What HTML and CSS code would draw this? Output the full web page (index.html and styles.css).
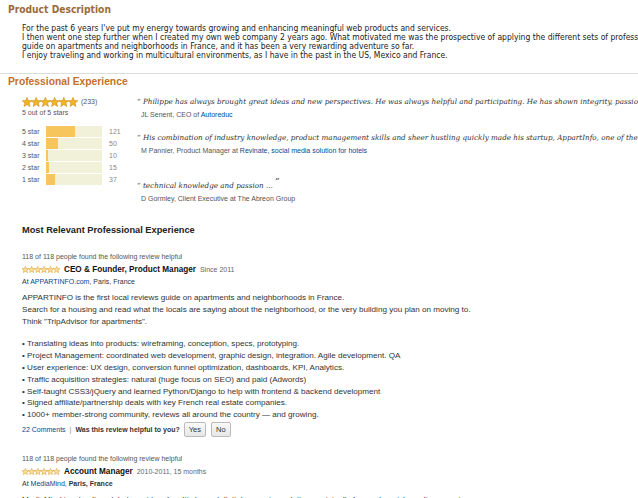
FILE: index.html
```html
<!DOCTYPE html>
<html lang="en">
<head>
    <meta charset="UTF-8">
    <meta name="viewport" content="width=device-width, initial-scale=1.0">
    <title>Profile</title>
    <link rel="stylesheet" href="styles.css">
</head>
<body>
    <svg width="0" height="0" class="defs">
        <defs>
            <polygon id="star" points="5,0.4 6.3,3.6 9.8,3.8 7.1,6 8,9.5 5,7.6 2,9.5 2.9,6 0.2,3.8 3.7,3.6"/>
        </defs>
    </svg>

    <h2 class="section-title desc-title">Product Description</h2>
    <div class="desc-text">
        <p>For the past 6 years I've put my energy towards growing and enhancing meaningful web products and services.</p>
        <p>I then went one step further when I created my own web company 2 years ago. What motivated me was the prospective of applying the different sets of professional skills I had acquired to a local reviews</p>
        <p>guide on apartments and neighborhoods in France, and it has been a very rewarding adventure so far.</p>
        <p>I enjoy traveling and working in multicultural environments, as I have in the past in the US, Mexico and France.</p>
    </div>
    <hr class="divider">

    <h2 class="section-title exp-title">Professional Experience</h2>
    <div class="summary">
        <div class="rating-box">
            <div class="big-rating">
                <svg class="stars-big" width="56" height="10" viewBox="0 0 56 10">
                    <use href="#star" x="0"/><use href="#star" x="9.2"/><use href="#star" x="18.4"/>
                    <use href="#star" x="27.6"/><use href="#star" x="36.8"/><use href="#star" x="46"/>
                </svg>
                <span class="count">(233)</span>
            </div>
            <div class="out-of">5 out of 5 stars</div>
            <div class="histo">
                <div class="histo-row"><span class="lbl">5 star</span><span class="bar"><span class="fill" style="width:52%"></span></span><span class="num">121</span></div>
                <div class="histo-row"><span class="lbl">4 star</span><span class="bar"><span class="fill" style="width:21%"></span></span><span class="num">50</span></div>
                <div class="histo-row"><span class="lbl">3 star</span><span class="bar"><span class="fill" style="width:4%"></span></span><span class="num">10</span></div>
                <div class="histo-row"><span class="lbl">2 star</span><span class="bar"><span class="fill" style="width:6%"></span></span><span class="num">15</span></div>
                <div class="histo-row"><span class="lbl">1 star</span><span class="bar"><span class="fill" style="width:16%"></span></span><span class="num">37</span></div>
            </div>
        </div>
        <div class="quotes">
            <div class="quote">
                <p class="quote-text">&ldquo; Philippe has always brought great ideas and new perspectives. He was always helpful and participating. He has shown integrity, passion and commitment.</p>
                <p class="quote-by">JL Senent, CEO of <a href="#">Autoreduc</a></p>
            </div>
            <div class="quote">
                <p class="quote-text">&ldquo; His combination of industry knowledge, product management skills and sheer hustling quickly made his startup, AppartInfo, one of the leading sites.</p>
                <p class="quote-by">M Pannier, Product Manager at <a href="#">Revinate, social media solution for hotels</a></p>
            </div>
            <div class="quote">
                <p class="quote-text">&ldquo; technical knowledge and passion ... <sup>&rdquo;</sup></p>
                <p class="quote-by">D Gormley, Client Executive at The Abreon Group</p>
            </div>
        </div>
    </div>

    <h3 class="relevant">Most Relevant Professional Experience</h3>

    <div class="review">
        <div class="helpful">118 of 118 people found the following review helpful</div>
        <div class="review-head">
            <svg class="stars-small" width="38" height="7" viewBox="0 0 56 10">
                <use href="#star" x="0"/><use href="#star" x="9.2"/><use href="#star" x="18.4"/>
                <use href="#star" x="27.6"/><use href="#star" x="36.8"/><use href="#star" x="46"/>
            </svg>
            <b class="role">CEO &amp; Founder, Product Manager</b>
            <span class="when">Since 2011</span>
        </div>
        <div class="where">At <a href="#">APPARTINFO.com</a>, Paris, France</div>
        <div class="review-body">
            <p>APPARTINFO is the first local reviews guide on apartments and neighborhoods in France.</p>
            <p>Search for a housing and read what the locals are saying about the neighborhood, or the very building you plan on moving to.</p>
            <p>Think "TripAdvisor for apartments".</p>
            <p class="gap">&bull; Translating ideas into products: wireframing, conception, specs, prototyping.</p>
            <p>&bull; Project Management: coordinated web development, graphic design, integration. Agile development. QA</p>
            <p>&bull; User experience: UX design, conversion funnel optimization, dashboards, KPI, Analytics.</p>
            <p>&bull; Traffic acquisition strategies: natural (huge focus on SEO) and paid (Adwords)</p>
            <p>&bull; Self-taught CSS3/jQuery and learned Python/Django to help with frontend &amp; backend development</p>
            <p>&bull; Signed affiliate/partnership deals with key French real estate companies.</p>
            <p>&bull; 1000+ member-strong community, reviews all around the country &mdash; and growing.</p>
        </div>
        <div class="review-foot">
            <a href="#">22 Comments</a>
            <span class="sep">|</span>
            <b>Was this review helpful to you?</b>
            <button class="vote">Yes</button>
            <button class="vote">No</button>
        </div>
    </div>

    <div class="review">
        <div class="helpful">118 of 118 people found the following review helpful</div>
        <div class="review-head">
            <svg class="stars-small" width="38" height="7" viewBox="0 0 56 10">
                <use href="#star" x="0"/><use href="#star" x="9.2"/><use href="#star" x="18.4"/>
                <use href="#star" x="27.6"/><use href="#star" x="36.8"/><use href="#star" x="46"/>
            </svg>
            <b class="role">Account Manager</b>
            <span class="when">2010-2011, 15 months</span>
        </div>
        <div class="where">At <a href="#">MediaMind</a>, <b>Paris, France</b></div>
        <div class="review-body">
            <p>MediaMind is a leading global provider of multi channel digital campaign solutions, originally focused on rich media campaigns.</p>
        </div>
    </div>
</body>
</html>
```

FILE: styles.css
```css
body {
    margin: 0;
    padding: 0 0 0 8px;
    overflow: hidden;
    white-space: nowrap;
    font-family: "Liberation Sans", Arial, sans-serif;
    color: #333;
    background: #fff;
}
p {
    margin: 0;
}
a {
    color: #004b91;
    text-decoration: none;
}
.defs {
    position: absolute;
}
.section-title {
    margin: 0;
    font-weight: bold;
}
.desc-title {
    padding-top: 3px;
    font-family: "DejaVu Sans Condensed", "DejaVu Sans", sans-serif;
    font-size: 10.2px;
    line-height: 13px;
    color: #9c6b38;
}
.desc-text {
    margin: 8px 0 0 14px;
    font-family: "DejaVu Sans Condensed", "DejaVu Sans", sans-serif;
    font-size: 8.5px;
    line-height: 9px;
    color: #222;
}
.divider {
    margin: 13px 0 0 -8px;
    border: 0;
    border-top: 1px solid #ddd;
}
.exp-title {
    margin-top: 1px;
    font-size: 10.3px;
    line-height: 14px;
    color: #c3702b;
}
.summary {
    display: flex;
    margin: 7px 0 0 14px;
}
.rating-box {
    width: 115px;
    flex-shrink: 0;
}
.big-rating {
    display: flex;
    align-items: center;
    gap: 3px;
    height: 11px;
}
.stars-big use {
    fill: #f4b524;
    stroke: #c88a1a;
    stroke-width: 0.6;
}
.count,
.out-of {
    font-size: 7px;
    color: #555;
}
.out-of {
    margin-top: 1px;
    line-height: 9px;
}
.histo {
    margin-top: 8px;
}
.histo-row {
    display: flex;
    align-items: center;
    height: 12px;
    font-size: 7px;
    color: #555;
}
.lbl {
    width: 24px;
}
.bar {
    width: 56px;
    height: 11px;
    background: #f1f0d8;
}
.fill {
    display: block;
    height: 100%;
    background: #f6c65c;
}
.num {
    margin-left: 7px;
    color: #888;
}
.quote {
    margin-bottom: 13px;
}
.quote:nth-child(2) {
    margin-bottom: 25px;
}
.quote-text {
    font-family: "DejaVu Serif", Georgia, serif;
    font-style: italic;
    font-size: 7.2px;
    line-height: 11px;
    color: #333;
}
.quote-text sup {
    font-size: 9px;
    line-height: 0;
}
.quote-by {
    margin: 3px 0 0 4px;
    font-size: 7px;
    line-height: 9px;
    color: #555;
}
.relevant {
    margin: 8px 0 0 14px;
    font-size: 9.25px;
    line-height: 12px;
    color: #222;
}
.review {
    margin: 16px 0 0 14px;
}
.review + .review {
    margin-top: 17px;
}
.helpful {
    font-size: 7px;
    line-height: 9px;
    color: #555;
}
.review-head {
    display: flex;
    align-items: center;
    gap: 4px;
    margin-top: 3px;
    height: 11px;
}
.stars-small use {
    fill: #fbe3a0;
    stroke: #e0a23a;
    stroke-width: 0.9;
}
.role {
    font-size: 8.2px;
    color: #111;
}
.when {
    font-size: 7px;
    color: #666;
}
.where {
    margin-top: 2px;
    font-size: 7px;
    line-height: 10px;
    color: #333;
}
.review-body {
    margin-top: 5px;
    font-size: 8.1px;
    line-height: 11.8px;
    color: #333;
}
.review-body .gap {
    margin-top: 11px;
}
.review-foot {
    display: flex;
    align-items: center;
    gap: 4px;
    margin-top: 1px;
    font-size: 7px;
}
.sep {
    color: #888;
}
.vote {
    font-family: "Liberation Sans", Arial, sans-serif;
    font-size: 7.5px;
    padding: 1px 4px;
    height: 15px;
    border: 1px solid #bbb;
    border-radius: 2px;
    background: linear-gradient(#fafafa, #e6e6e6);
    color: #333;
}
.vote + .vote {
    margin-left: 1px;
}
```
